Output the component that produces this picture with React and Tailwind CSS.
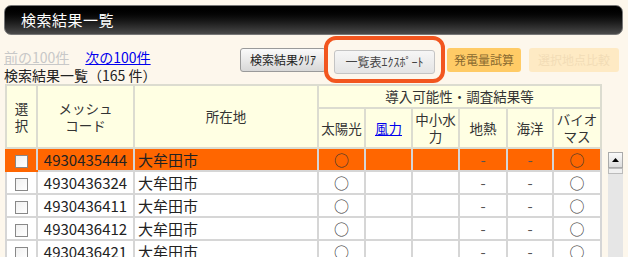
import React from "react";

const rows = [
  { code: "4930435444", city: "大牟田市", selected: true },
  { code: "4930436324", city: "大牟田市" },
  { code: "4930436411", city: "大牟田市" },
  { code: "4930436412", city: "大牟田市" },
  { code: "4930436421", city: "大牟田市" },
];

const font = { fontFamily: '"Noto Sans CJK JP", "Noto Sans", sans-serif' };

const Th = ({ children, className = "", ...rest }) => (
  <th
    {...rest}
    className={`border-2 border-[#dcdcd0] bg-[#ffffe3] font-normal text-[13.5px] leading-[17px] text-[#333] text-center align-middle p-0 ${className}`}
  >
    {children}
  </th>
);

const Td = ({ children, className = "" }) => (
  <td className={`border-2 border-[#d6d6d6] p-0 h-[23px] text-[15px] leading-[19px] align-middle ${className}`}>
    {children}
  </td>
);

export default function App() {
  return (
    <div className="w-[628px] h-[257px] overflow-hidden bg-[#fdf7ec] relative" style={font}>
      <div className="mx-[4px] mt-[5px] h-[30px] w-[619px] rounded-[7px] border border-[#777] bg-gradient-to-b from-[#000] via-[#151515] to-[#4a4a4a] flex items-center pl-[16px]">
        <span className="text-white text-[15px] tracking-[0.5px]">検索結果一覧</span>
      </div>

      <div className="flex items-start mt-[13px] pl-[4px]">
        <div className="flex gap-[16px] text-[14px] leading-[16px] pt-[1px] w-[236px]">
          <span className="text-[#c8c8c8] underline">前の100件</span>
          <span className="text-[#0000ee] underline">次の100件</span>
        </div>
        <button className="h-[24px] w-[86px] rounded-[3px] border border-[#9a9a9a] bg-gradient-to-b from-[#fafafa] to-[#d8d8d8] text-[12px] text-[#222]">
          検索結果ｸﾘｱ
        </button>
        <div className="relative ml-[8px]">
          <button className="h-[24px] w-[101px] rounded-[3px] border border-[#c4c4c4] bg-gradient-to-b from-[#f6f6f6] to-[#e4e4e4] text-[12px] text-[#444]">
            一覧表ｴｸｽﾎﾟｰﾄ
          </button>
          <div className="absolute left-[-10px] right-[-10px] top-[-12px] bottom-[-9px] rounded-[12px] border-[4px] border-[#f2561f] pointer-events-none" />
        </div>
        <button className="ml-[12px] h-[24px] w-[74px] rounded-[3px] bg-[#ffcb66] text-[12px] text-[#8a6a30]">
          発電量試算
        </button>
        <button className="ml-[8px] h-[24px] w-[90px] rounded-[3px] bg-[#feeac4] text-[12px] text-[#f2dcb6]">
          選択地点比較
        </button>
      </div>

      <div className="pl-[4px] mt-[-7px] text-[14px] leading-[16px] text-[#222]">検索結果一覧（165 件）</div>

      <div className="flex mt-[1px]">
        <table className="ml-[5px] table-fixed border-collapse w-[595px] shrink-0">
          <colgroup>
            <col className="w-[31px]" />
            <col className="w-[97px]" />
            <col className="w-[184px]" />
            <col className="w-[47px]" />
            <col className="w-[47px]" />
            <col className="w-[47px]" />
            <col className="w-[48px]" />
            <col className="w-[46px]" />
            <col className="w-[48px]" />
          </colgroup>
          <thead>
            <tr className="h-[23px]">
              <Th rowSpan={2}>選<br />択</Th>
              <Th rowSpan={2}>メッシュ<br />コード</Th>
              <Th rowSpan={2}>所在地</Th>
              <Th colSpan={6}>導入可能性・調査結果等</Th>
            </tr>
            <tr className="h-[40px]">
              <Th>太陽光</Th>
              <Th><span className="text-[#0000ee] underline">風力</span></Th>
              <Th>中小水<br />力</Th>
              <Th>地熱</Th>
              <Th>海洋</Th>
              <Th>バイオ<br />マス</Th>
            </tr>
          </thead>
          <tbody>
            {rows.map((r) => (
              <tr key={r.code} className={r.selected ? "bg-[#ff6600]" : "bg-white"}>
                <Td className={`text-center ${r.selected ? "border-[#ff6600] border-r-[#d6d6d6]" : ""}`}>
                  <span className="inline-block w-[13px] h-[13px] border border-[#888] bg-gradient-to-br from-[#f0f0f0] to-white align-middle" />
                </Td>
                <Td className="text-center text-[#222]">{r.code}</Td>
                <Td className="pl-[3px] text-[#222]">{r.city}</Td>
                <Td className="text-center text-[#333]">○</Td>
                <Td />
                <Td />
                <Td className="text-center text-[#555]">-</Td>
                <Td className="text-center text-[#555]">-</Td>
                <Td className="text-center text-[#333]">○</Td>
              </tr>
            ))}
          </tbody>
        </table>
      </div>

      <div className="absolute left-[608px] top-[152px] w-[15px] h-[110px] bg-[#e6e6e6]">
        <div className="w-[15px] h-[16px] border border-[#aaa] bg-gradient-to-b from-[#fafafa] to-[#dcdcdc] flex items-center justify-center">
          <svg width="7" height="4" viewBox="0 0 7 4"><path d="M0 4 L3.5 0 L7 4 Z" fill="#000" /></svg>
        </div>
        <div className="w-[15px] h-[6px] border border-[#bbb] bg-[#f0f0f0]" />
      </div>
    </div>
  );
}
